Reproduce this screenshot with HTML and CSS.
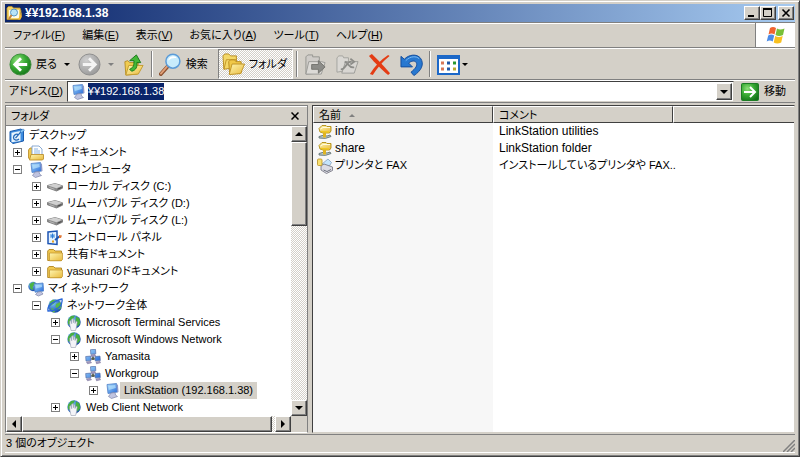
FILE: index.html
```
<!DOCTYPE html>
<html lang="ja">
<head>
    <meta charset="UTF-8">
    <meta name="viewport" content="width=device-width, initial-scale=1.0">
    <title>¥¥192.168.1.38</title>
    <link rel="stylesheet" href="styles.css">
</head>
<body>
    <!-- Icon symbols -->
    <svg class="symbols" aria-hidden="true">
        <defs>
            <linearGradient id="gold" x1="0" y1="0" x2="1" y2="1"><stop offset="0" stop-color="#fff6b0"/><stop offset="1" stop-color="#e8b93c"/></linearGradient>
            <linearGradient id="blue" x1="0" y1="0" x2="1" y2="1"><stop offset="0" stop-color="#a8dcfc"/><stop offset="1" stop-color="#2468d8"/></linearGradient>
            <radialGradient id="green" cx=".35" cy=".3" r=".8"><stop offset="0" stop-color="#8ee07a"/><stop offset=".5" stop-color="#36a832"/><stop offset="1" stop-color="#127018"/></radialGradient>
            <radialGradient id="gray" cx=".35" cy=".3" r=".8"><stop offset="0" stop-color="#cfcfcf"/><stop offset="1" stop-color="#969696"/></radialGradient>
            <radialGradient id="earth" cx=".35" cy=".3" r=".8"><stop offset="0" stop-color="#7cc4f8"/><stop offset="1" stop-color="#0c3c9c"/></radialGradient>
        </defs>
        <symbol id="i-desktop" viewBox="0 0 16 16">
            <path d="M1 3.500 12 1l2.500 2v10L4 15.500 1 13z" fill="#3c8ce0" stroke="#1c5cac"/>
            <path d="M2.500 4.800l9-1.800v10l-9 1.200z" fill="#e8f4fc"/>
            <path d="M9.500 7C7.500 5 4.500 7 4.500 9.500s3 3.500 5.500 1.500M6.500 10.200l6-7" fill="none" stroke="#2468b8" stroke-width="1.300"/>
            <path d="M11 3l3-2 1.500 1-3 3z" fill="#8cc8f4" stroke="#2468b8" stroke-width=".5"/>
        </symbol>
        <symbol id="i-docs" viewBox="0 0 16 16">
            <path d="M.5 5 2 3h4v11H1.500l-1-1z" fill="#f0c850" stroke="#b88820" stroke-width=".8"/>
            <path d="M4 1h7l3 3v9H4z" fill="#fff" stroke="#6c94c8" stroke-width=".8"/>
            <path d="M6 4h4M6 6h6M6 8h6" stroke="#88b4e4"/>
            <path d="M1.500 15 3 9.500h12.500v4.500l-1 1z" fill="url(#gold)" stroke="#b88820" stroke-width=".8"/>
        </symbol>
        <symbol id="i-pc" viewBox="0 0 16 16">
            <path d="M3 1.500 12.500.5l1 8.500L4 10.500z" fill="url(#blue)" stroke="#5080c8" stroke-width=".8"/>
            <path d="M4.300 2.700l7-.8.500 3.200-7 2z" fill="#c4ecff" opacity=".6"/>
            <path d="M7 10l4-.5.500 2.500 2 1.500-6 2-3-2z" fill="#c0c4e0" stroke="#7c84a8" stroke-width=".7"/>
            <path d="M12.500 1l1.500 1 .5 7-1.500.5z" fill="#8c98c8"/>
        </symbol>
        <symbol id="i-drive" viewBox="0 0 16 16">
            <path d="M.5 6.500 8 4.500l7.500 2.300v2.400L9.500 12 .5 8.800z" fill="#8c8c8c" stroke="#666" stroke-width=".7"/>
            <path d="M.8 6.500 8 4.600l7 2.200-5.500 2.400z" fill="#d0d0d0"/>
            <path d="M10.500 10.200l4-1.700" stroke="#444"/>
            <path d="M2.500 8.500l5 1.800" stroke="#b8b8b8"/>
        </symbol>
        <symbol id="i-control" viewBox="0 0 16 16">
            <path d="M1 2l9-1v13.500L1 13.500z" fill="#e4f2fe" stroke="#1c54b4" stroke-width="1.500"/>
            <path d="M5.500 3.500v5M3 6h5M3.700 4.200l3.600 3.600m0-3.600L3.700 7.800" stroke="#2c7cd8"/>
            <path d="M5 11.500h2" stroke="#e8a020" stroke-width="2"/>
            <path d="M8 10l5-4" stroke="#1c54b4" stroke-width="1.800"/>
            <path d="M12 5l3 .500-1 2.500h-2z" fill="#e07838"/>
        </symbol>
        <symbol id="i-folder" viewBox="0 0 16 16">
            <path d="M.7 4 2 2.500h4.500L8 4h6.500v9.500H.7z" fill="#f0c850" stroke="#b08420" stroke-width=".9"/>
            <path d="M2.500 6h13v6.500l-1.300 1.300H2.500z" fill="url(#gold)" stroke="#c09028" stroke-width=".7"/>
        </symbol>
        <symbol id="i-globe" viewBox="0 0 16 16">
            <circle cx="8" cy="8" r="6.800" fill="url(#earth)"/>
            <path d="M3 4l3-2.500 3 1.500-2 2.500-3 2-2 1zM9 6l4-2 1.500 3-1 4-3 .500-2-3zM4 10l3 1 1 3-2 .5z" fill="#58b848"/>
            <path d="M1 13C0 8 4 4 15 1c1 6-4 12-14 12z" fill="none" stroke="#2c68d8" stroke-width="1.300"/>
        </symbol>
        <symbol id="i-places" viewBox="0 0 16 16">
            <circle cx="5" cy="5.500" r="4.700" fill="url(#earth)"/>
            <path d="M1.500 3l4-2 2 2-3 3 1 3-3-1z" fill="#4cb444"/>
            <path d="M6 3l9-1 .7 8-8.700 1.200z" fill="url(#blue)" stroke="#5080c8" stroke-width=".8"/>
            <path d="M7.500 4.200l6.300-.7.200 2.500-6.200 1.500z" fill="#c4ecff" opacity=".6"/>
            <path d="M10 11l3-.5 2 2.500-4.500 2-3-1.500z" fill="#c0c4e0" stroke="#7c84a8" stroke-width=".7"/>
        </symbol>
        <symbol id="i-net" viewBox="0 0 16 16">
            <circle cx="8" cy="7" r="6.700" fill="url(#earth)"/>
            <path d="M2 5l3-4 4-.5L7 4 4 6v4l-2-1zM10 1.500l3.500 2 .7 5-2.700 3-2-5z" fill="#48b040"/>
            <path d="M5 15.500 3.800 10V6l1.200-.3.700 3V4l1.300-.3.500 4V4.500l1.300.2.200 3.800 1-2.300 1.200.6-.7 5.200-1 3.500z" fill="#f4f4f8" stroke="#98a0b0" stroke-width=".6"/>
        </symbol>
        <symbol id="i-group" viewBox="0 0 16 16">
            <path d="M8 7v3M3 10h10" stroke="#4c5878"/>
            <path d="M5.500.7l5-.4.300 4.500-5 .5zM.7 7.500l5-.4.300 4.500-5 .5zM10 7.500l5-.4.300 4.500-5 .5z" fill="url(#blue)" stroke="#5870a8" stroke-width=".7"/>
            <path d="M6 6l4-.5.500 1.500-4 .6zM1.500 13l4-.6 1 1.400-4 1zM11 13l4-.6.5 1.400-4 1z" fill="#a49cc4" stroke="#706890" stroke-width=".5"/>
            <circle cx="8" cy="9.500" r="1.500" fill="#58604c"/>
        </symbol>
        <symbol id="i-share" viewBox="0 0 16 16">
            <path d="M2 4.500 5 1.500h4l1 1h4v4.500L12.500 9H6L3 8z" fill="url(#gold)" stroke="#b08c10" stroke-width=".9"/>
            <path d="M3.500 5 6 3.500h7" fill="none" stroke="#fffce0"/>
            <path d="M4 7.500l8 .5" stroke="#f0c820" stroke-width="1.500"/>
            <path d="M2 12.500q4-2 8-.5l3-1 1 1.500q-5 3-12 1.500z" fill="#b8c8c8" stroke="#586868" stroke-width=".8"/>
            <path d="M7.500 9v4.500" stroke="#e0b420" stroke-width="3"/>
        </symbol>
        <symbol id="i-printer" viewBox="0 0 16 16">
            <path d="M5 6l6-5 3.500 3.500-3 5z" fill="#c4e4fc" stroke="#7898b8" stroke-width=".7"/>
            <path d="M4 8l3-2 8.500 3v3.500l-6 3L4 12z" fill="#dcdce4" stroke="#70707c" stroke-width=".8"/>
            <path d="M6.500 12l3.500 1.500 4-2" stroke="#6c707c" fill="none"/>
            <rect x=".5" y="1" width="4.500" height="6.500" rx="1" fill="#f8e070" stroke="#b89020" stroke-width=".8"/>
        </symbol>
        <symbol id="i-title" viewBox="0 0 16 16">
            <path d="M1 3 2.500 1.500H6L7.500 3H14l1 3-1 8.500H1z" fill="#f4d468" stroke="#c09428" stroke-width=".8"/>
            <path d="M3 5h10v8H3z" fill="#fffbe8"/>
            <circle cx="8" cy="7.500" r="3.500" fill="#b8e4f8" stroke="#5898c8"/>
            <path d="M5.500 10 3 14" stroke="#c88440" stroke-width="2"/>
            <path d="M12 14.500 15.500 7l.3 5-1.500 2.500z" fill="#f0b838"/>
        </symbol>
        <symbol id="i-back" viewBox="0 0 24 24">
            <circle cx="12" cy="12" r="11" fill="url(#green)" stroke="#3c8c3c"/>
            <path d="M19 12H7M12.500 5.500 6 12l6.500 6.500" fill="none" stroke="#fff" stroke-width="3"/>
        </symbol>
        <symbol id="i-forward" viewBox="0 0 24 24">
            <circle cx="12" cy="12" r="11" fill="url(#gray)" stroke="#8c8c8c"/>
            <path d="M5 12h12M11.500 5.500 18 12l-6.500 6.500" fill="none" stroke="#f4f4f4" stroke-width="3"/>
        </symbol>
        <symbol id="i-up" viewBox="0 0 24 24">
            <path d="M3 9l3-1 2 2h9l-1 12-12 1z" fill="#f0cc50" stroke="#b89028"/>
            <path d="M4 23l3-10h15l-5 9z" fill="url(#gold)" stroke="#c49c30"/>
            <path d="M10 19c5-1 6-5 5.500-9H19.500L15 2 8 8h4.500c0 4 0 7-4.500 9z" fill="#44b838" stroke="#187818"/>
        </symbol>
        <symbol id="i-search" viewBox="0 0 24 24">
            <path d="M9 14 2 22" stroke="#8c5030" stroke-width="4" stroke-linecap="round"/>
            <path d="M9 13.500 2 21.500" stroke="#e0a078" stroke-width="2" stroke-linecap="round"/>
            <circle cx="14.500" cy="8.500" r="7.300" fill="#c8ecfc" stroke="#5c9cd8" stroke-width="1.600"/>
            <path d="M9.500 8c.5-3 3-4.500 5.500-4.500 2 0 3 1 3.500 2-3-.5-6 0-9 2.500z" fill="#fff"/>
        </symbol>
        <symbol id="i-folders" viewBox="0 0 24 24">
            <path d="M1 3l2-2h4l2 2h6v12l-13 2z" fill="#f4d868" stroke="#b88c20"/>
            <path d="M7 9l2-2h4l1.500 2H20v12l-12 1z" fill="#f0c848" stroke="#b88c20"/>
            <path d="M7.500 22.500l3-11H23.500l-4 10z" fill="url(#gold)" stroke="#c09428"/>
            <path d="M2 17l2.500-10H15v2" fill="none" stroke="#c09428"/>
        </symbol>
        <symbol id="i-move" viewBox="0 0 24 24">
            <path d="M2 4l2-2h5v2h7v17l-14 1z" fill="#cfccc8" stroke="#949490"/>
            <path d="M2 22l3-13h13l4 1-4 12z" fill="#dcdad6" stroke="#9c9c98"/>
            <path d="M8 12h7V8l7 6.500-7 6.500v-4H8z" fill="#8c8c88" stroke="#74746f"/>
        </symbol>
        <symbol id="i-copy" viewBox="0 0 24 24">
            <path d="M1 5l2-2h4l1 2h5v13l-12 2z" fill="#dad8d4" stroke="#a4a49f"/>
            <path d="M6 21l4-12h13l-4 12z" fill="#d8d6d2" stroke="#9c9c98"/>
            <path d="M5 17c6 0 5-8 11-8M9 9c5 2 4 7 10 6m-4-9 4 3-4 3" fill="none" stroke="#8c8c88" stroke-width="1.800"/>
        </symbol>
        <symbol id="i-delete" viewBox="0 0 24 24">
            <path d="M1 3 4 1c6 6 12 12 19 20l-2 2C15 18 7 10 1 3z" fill="#e43c14"/>
            <path d="M21 2l1.500 1C15 9 9 16 5 23l-3-1C7 14 13 7 21 2z" fill="#e43c14"/>
        </symbol>
        <symbol id="i-undo" viewBox="0 0 24 24">
            <path d="M1 3.500 4.500 6.500c5-5 13-6 17-1 4 6 1 13-7 18l-3-3.500c5-4 7-7 5.500-10-1.500-2.500-5-2-8 .5L13 14.500H1z" fill="#2878d0" stroke="#144c9c"/>
            <path d="M6 8c5-5 11-5 14-2" fill="none" stroke="#7cbcf4"/>
        </symbol>
        <symbol id="i-views" viewBox="0 0 23 23">
            <rect x="1" y="3" width="21" height="18" fill="#fff" stroke="#1c68c8" stroke-width="2"/>
            <path d="M0 4h23" stroke="#1c68c8" stroke-width="4"/>
            <path d="M4 10h3M4 16h3" stroke="#d87858" stroke-width="3"/>
            <path d="M10 10h3M10 16h3" stroke="#2058a8" stroke-width="3"/>
            <path d="M16 10h3" stroke="#289830" stroke-width="3"/>
            <path d="M16 16h3" stroke="#b8a830" stroke-width="3"/>
        </symbol>
        <symbol id="i-go" viewBox="0 0 18 18">
            <rect x=".5" y=".5" width="17" height="17" rx="1" fill="url(#green)" stroke="#1c7c24"/>
            <path d="M3 9h11M9 4l5 5-5 5" fill="none" stroke="#fff" stroke-width="2"/>
        </symbol>
        <symbol id="i-flag" viewBox="0 0 20 18">
            <path d="M4 2q3-2 6 0L8.500 8.500q-3-2-6 0z" fill="#f06430"/>
            <path d="M11 2.500q3 2 7.500 0L17 9q-4 2-7.500 0z" fill="#78c038"/>
            <path d="M2.200 9.500q3-2 6 0L6.700 15.500q-3-2-6 0z" fill="#4c8ce8"/>
            <path d="M9.200 10q3.500 2 7.500 0l-1.500 6.500q-4 2-7.500 0z" fill="#f8c020"/>
        </symbol>
    </svg>

    <div class="window">
        <!-- Title bar -->
        <header class="titlebar">
            <svg class="icon"><use href="#i-title"/></svg>
            <h1>¥¥192.168.1.38</h1>
            <div class="window-buttons">
                <button class="raised" aria-label="最小化"><svg viewBox="0 0 12 10"><path d="M2 8h6" stroke="#000" stroke-width="2"/></svg></button>
                <button class="raised" aria-label="最大化"><svg viewBox="0 0 12 10"><path d="M1.500 1v7.500h8V1M1 1h9" fill="none" stroke="#000"/><path d="M1 1h9" stroke="#000" stroke-width="2"/></svg></button>
                <button class="raised close" aria-label="閉じる"><svg viewBox="0 0 12 10"><path d="M2.500 1.500l7 7m0-7-7 7" stroke="#000" stroke-width="1.600"/></svg></button>
            </div>
        </header>

        <!-- Menu bar -->
        <nav class="menubar">
            <button>ファイル(<u>F</u>)</button>
            <button>編集(<u>E</u>)</button>
            <button>表示(<u>V</u>)</button>
            <button>お気に入り(<u>A</u>)</button>
            <button>ツール(<u>T</u>)</button>
            <button>ヘルプ(<u>H</u>)</button>
            <div class="brand"><svg><use href="#i-flag"/></svg></div>
        </nav>

        <!-- Toolbar -->
        <div class="toolbar">
            <button class="tool"><svg><use href="#i-back"/></svg>戻る</button>
            <button class="drop" aria-label="戻る履歴"></button>
            <button class="tool" aria-label="進む" disabled><svg><use href="#i-forward"/></svg></button>
            <button class="drop" aria-label="進む履歴" disabled></button>
            <button class="tool" aria-label="上へ"><svg><use href="#i-up"/></svg></button>
            <span class="separator"></span>
            <button class="tool"><svg><use href="#i-search"/></svg>検索</button>
            <button class="tool pressed" aria-pressed="true"><svg><use href="#i-folders"/></svg>フォルダ</button>
            <span class="separator"></span>
            <div class="edit-tools">
                <button class="tool" aria-label="移動先" disabled><svg><use href="#i-move"/></svg></button>
                <button class="tool" aria-label="コピー先" disabled><svg><use href="#i-copy"/></svg></button>
                <button class="tool" aria-label="削除"><svg><use href="#i-delete"/></svg></button>
                <button class="tool" aria-label="元に戻す"><svg><use href="#i-undo"/></svg></button>
            </div>
            <span class="separator"></span>
            <button class="tool views" aria-label="表示"><svg><use href="#i-views"/></svg><span class="arrow-down"></span></button>
        </div>

        <!-- Address bar -->
        <form class="addressbar" onsubmit="return false">
            <label for="address">アドレス(<u>D</u>)</label>
            <div class="combo">
                <svg class="icon"><use href="#i-pc"/></svg>
                <input type="text" id="address" value="¥¥192.168.1.38" spellcheck="false" autocomplete="off">
                <button type="button" class="raised" aria-label="アドレス一覧"><span class="arrow-down big"></span></button>
            </div>
            <button class="go"><svg><use href="#i-go"/></svg>移動</button>
        </form>

        <main class="panes">
            <!-- Folder tree -->
            <section class="folders">
                <div class="folders-head">
                    <h2>フォルダ</h2>
                    <button aria-label="フォルダを閉じる"><svg viewBox="0 0 8 8"><path d="M.5.5l7 7m0-7-7 7" stroke="#000" stroke-width="1.500"/></svg></button>
                </div>
                <div class="tree-area">
                    <div class="tree">
                        <div class="row"><svg class="icon"><use href="#i-desktop"/></svg><span>デスクトップ</span></div>
                        <ul>
                            <li><div class="row"><button class="toggle plus" aria-label="展開"></button><svg class="icon"><use href="#i-docs"/></svg><span>マイ ドキュメント</span></div></li>
                            <li><div class="row"><button class="toggle" aria-label="折りたたむ"></button><svg class="icon"><use href="#i-pc"/></svg><span>マイ コンピュータ</span></div>
                                <ul>
                                    <li><div class="row"><button class="toggle plus" aria-label="展開"></button><svg class="icon"><use href="#i-drive"/></svg><span>ローカル ディスク (C:)</span></div></li>
                                    <li><div class="row"><button class="toggle plus" aria-label="展開"></button><svg class="icon"><use href="#i-drive"/></svg><span>リムーバブル ディスク (D:)</span></div></li>
                                    <li><div class="row"><button class="toggle plus" aria-label="展開"></button><svg class="icon"><use href="#i-drive"/></svg><span>リムーバブル ディスク (L:)</span></div></li>
                                    <li><div class="row"><button class="toggle plus" aria-label="展開"></button><svg class="icon"><use href="#i-control"/></svg><span>コントロール パネル</span></div></li>
                                    <li><div class="row"><button class="toggle plus" aria-label="展開"></button><svg class="icon"><use href="#i-folder"/></svg><span>共有ドキュメント</span></div></li>
                                    <li><div class="row"><button class="toggle plus" aria-label="展開"></button><svg class="icon"><use href="#i-folder"/></svg><span>yasunari のドキュメント</span></div></li>
                                </ul>
                            </li>
                            <li><div class="row"><button class="toggle" aria-label="折りたたむ"></button><svg class="icon"><use href="#i-places"/></svg><span>マイ ネットワーク</span></div>
                                <ul>
                                    <li><div class="row"><button class="toggle" aria-label="折りたたむ"></button><svg class="icon"><use href="#i-globe"/></svg><span>ネットワーク全体</span></div>
                                        <ul>
                                            <li><div class="row"><button class="toggle plus" aria-label="展開"></button><svg class="icon"><use href="#i-net"/></svg><span>Microsoft Terminal Services</span></div></li>
                                            <li><div class="row"><button class="toggle" aria-label="折りたたむ"></button><svg class="icon"><use href="#i-net"/></svg><span>Microsoft Windows Network</span></div>
                                                <ul>
                                                    <li><div class="row"><button class="toggle plus" aria-label="展開"></button><svg class="icon"><use href="#i-group"/></svg><span>Yamasita</span></div></li>
                                                    <li><div class="row"><button class="toggle" aria-label="折りたたむ"></button><svg class="icon"><use href="#i-group"/></svg><span>Workgroup</span></div>
                                                        <ul>
                                                            <li><div class="row selected"><button class="toggle plus" aria-label="展開"></button><svg class="icon"><use href="#i-pc"/></svg><span>LinkStation (192.168.1.38)</span></div></li>
                                                        </ul>
                                                    </li>
                                                </ul>
                                            </li>
                                            <li><div class="row"><button class="toggle plus" aria-label="展開"></button><svg class="icon"><use href="#i-net"/></svg><span>Web Client Network</span></div></li>
                                        </ul>
                                    </li>
                                </ul>
                            </li>
                        </ul>
                    </div>
                    <div class="scrollbar vertical">
                        <button class="raised" aria-label="上へスクロール"><span class="arrow-up"></span></button>
                        <div class="raised thumb"></div>
                        <button class="raised" aria-label="下へスクロール"><span class="arrow-down big"></span></button>
                    </div>
                    <div class="scrollbar horizontal">
                        <button class="raised" aria-label="左へスクロール"><span class="arrow-left"></span></button>
                        <div class="raised thumb"></div>
                        <button class="raised" aria-label="右へスクロール"><span class="arrow-right"></span></button>
                    </div>
                </div>
            </section>

            <!-- File list -->
            <section class="files">
                <table>
                    <thead>
                        <tr>
                            <th class="name">名前<span class="sort"></span></th>
                            <th class="comment">コメント</th>
                            <th></th>
                        </tr>
                    </thead>
                    <tbody>
                        <tr><td><div class="file latin"><svg class="icon"><use href="#i-share"/></svg>info</div></td><td class="latin">LinkStation utilities</td><td></td></tr>
                        <tr><td><div class="file latin"><svg class="icon"><use href="#i-share"/></svg>share</div></td><td class="latin">LinkStation folder</td><td></td></tr>
                        <tr><td><div class="file"><svg class="icon"><use href="#i-printer"/></svg>プリンタと FAX</div></td><td>インストールしているプリンタや FAX..</td><td></td></tr>
                    </tbody>
                </table>
            </section>
        </main>

        <!-- Status bar -->
        <footer class="statusbar">
            <span>3 個のオブジェクト</span>
            <svg class="grip" viewBox="0 0 12 12"><path d="M0 12 12 0M4 12l8-8M8 12l4-4" stroke="#808080" stroke-width="1.500"/></svg>
        </footer>
    </div>

    <script>
        // The address is selected as soon as the window opens
        var address = document.getElementById('address');
        address.focus();
        address.select();
    </script>
</body>
</html>
```
FILE: styles.css
```
/* Base */
* {
    box-sizing: border-box;
}

body {
    margin: 0;
    height: 100vh;
    font-family: "Liberation Sans", "Noto Sans CJK JP", sans-serif;
    font-size: 11px;
    line-height: 17px;
    font-feature-settings: "palt";
    color: #000;
    background-color: #d4d0c8;
}

button,
input {
    font: inherit;
    font-feature-settings: inherit;
    color: inherit;
    margin: 0;
    padding: 0;
    border: none;
    background: none;
}

h1,
h2 {
    margin: 0;
    font-size: inherit;
}

svg {
    display: block;
    flex: none;
}

.symbols {
    position: absolute;
    width: 0;
    height: 0;
}

.icon {
    width: 16px;
    height: 16px;
}

.latin {
    font-size: 12px;
}

/* Classic raised button face */
.raised {
    display: flex;
    align-items: center;
    justify-content: center;
    background-color: #d4d0c8;
    border: 1px solid;
    border-color: #fff #404040 #404040 #fff;
    box-shadow: inset -1px -1px 0 #808080;
}

.arrow-down,
.arrow-up,
.arrow-left,
.arrow-right {
    border: 3px solid transparent;
}

.arrow-down {
    border-top-color: #000;
    border-bottom: none;
}

.arrow-down.big {
    border-width: 4px 4px 0;
}

.arrow-up {
    border-width: 0 4px 4px;
    border-bottom-color: #000;
}

.arrow-left {
    border-width: 4px 4px 4px 0;
    border-right-color: #000;
}

.arrow-right {
    border-width: 4px 0 4px 4px;
    border-left-color: #000;
}

/* Window frame */
.window {
    display: flex;
    flex-direction: column;
    height: 100%;
    padding: 3px 4px 3px;
    border: 1px solid;
    border-color: #d4d0c8 #404040 #404040 #d4d0c8;
    box-shadow: inset 1px 1px 0 #fff, inset -1px -1px 0 #808080;
}

.titlebar {
    display: flex;
    align-items: center;
    gap: 3px;
    height: 18px;
    flex: none;
    padding: 0 1px;
    color: #fff;
    background-image: linear-gradient(to right, #0a246a, #a6caf0);
}

.titlebar h1 {
    flex: 1;
    font-size: 12px;
}

.window-buttons {
    display: flex;
}

.window-buttons button {
    width: 16px;
    height: 14px;
}

.window-buttons svg {
    width: 12px;
    height: 10px;
}

.window-buttons .close {
    margin-left: 2px;
}

/* Menu bar */
.menubar {
    display: flex;
    align-items: center;
    gap: 17px;
    height: 26px;
    flex: none;
    padding-left: 8px;
    border: 1px solid #808080;
    border-width: 1px 0;
    box-shadow: inset 0 1px 0 #fff;
}

.brand {
    display: flex;
    align-items: center;
    justify-content: center;
    align-self: stretch;
    width: 40px;
    margin-left: auto;
    background-color: #fff;
    border-left: 1px solid #808080;
}

.brand svg {
    width: 20px;
    height: 18px;
}

/* Toolbar */
.toolbar {
    display: flex;
    align-items: center;
    height: 32px;
    flex: none;
    padding-left: 4px;
    border-top: 1px solid #fff;
    border-bottom: 1px solid #808080;
}

.tool {
    display: flex;
    align-items: center;
    gap: 4px;
}

.tool svg {
    width: 23px;
    height: 23px;
}

.drop {
    width: 21px;
    height: 22px;
    display: flex;
    align-items: center;
    justify-content: center;
}

.drop::before {
    content: "";
    border: 3px solid transparent;
    border-top-color: #000;
    border-bottom: none;
}

.drop:disabled::before {
    border-top-color: #808080;
}

.separator {
    width: 2px;
    height: 26px;
    margin: 0 6px;
    border-left: 1px solid #808080;
    border-right: 1px solid #fff;
}

.pressed {
    height: 30px;
    margin-left: 10px;
    padding: 0 5px 0 3px;
    border: 1px solid;
    border-color: #808080 #fff #fff #808080;
    background: repeating-conic-gradient(#fff 0 25%, #d4d0c8 0 50%) 0 0 / 2px 2px;
}

.pressed + .separator {
    margin-left: 3px;
}

.edit-tools {
    display: flex;
    gap: 9px;
}

.views {
    gap: 2px;
}

/* Address bar */
.addressbar {
    display: flex;
    align-items: center;
    gap: 7px;
    height: 23px;
    flex: none;
    padding: 0 9px 0 4px;
    border-top: 1px solid #fff;
    border-bottom: 1px solid #808080;
}

.addressbar label {
    margin-right: -3px;
}

.combo {
    display: flex;
    align-items: center;
    flex: 1;
    height: 21px;
    padding: 1px 1px 1px 2px;
    background-color: #fff;
    border: 1px solid;
    border-color: #404040 #d4d0c8 #d4d0c8 #404040;
}

.combo input {
    flex: 1;
    min-width: 0;
    margin-left: 2px;
    outline: none;
}

.combo input::selection {
    color: #fff;
    background-color: #0a246a;
}

.combo button {
    width: 16px;
    height: 17px;
}

.go {
    display: flex;
    align-items: center;
    gap: 5px;
}

.go svg {
    width: 18px;
    height: 18px;
}

/* Panes */
.panes {
    display: flex;
    gap: 4px;
    flex: 1;
    min-height: 0;
    margin-top: 2px;
}

.folders {
    display: flex;
    flex-direction: column;
    width: 303px;
    flex: none;
    border: 1px solid;
    border-color: #808080 #808080 #fff #808080;
}

.folders-head {
    display: flex;
    align-items: center;
    justify-content: space-between;
    height: 20px;
    flex: none;
    padding: 0 8px 0 5px;
    border-top: 1px solid #fff;
    border-bottom: 1px solid #808080;
}

.folders-head h2 {
    font-weight: normal;
}

.folders-head svg {
    width: 8px;
    height: 8px;
}

.tree-area {
    display: grid;
    grid-template-columns: 1fr 16px;
    grid-template-rows: 1fr 16px;
    flex: 1;
    min-height: 0;
}

.tree {
    overflow: hidden;
    min-height: 0;
    padding: 1px 0 0 3px;
    background-color: #fff;
}

.tree ul {
    margin: 0;
    padding: 0 0 0 4px;
    list-style: none;
}

.tree ul ul {
    padding-left: 19px;
}

.row {
    display: flex;
    align-items: center;
    height: 17px;
    white-space: nowrap;
}

.row span {
    padding: 0 4px;
}

.selected span {
    background-color: #d4d0c8;
}

.toggle {
    width: 9px;
    height: 9px;
    margin-right: 6px;
    border: 1px solid #808080;
    background: linear-gradient(#000, #000) center / 5px 1px no-repeat;
}

.toggle.plus {
    background: linear-gradient(#000, #000) center / 5px 1px no-repeat, linear-gradient(#000, #000) center / 1px 5px no-repeat;
}

.scrollbar {
    display: flex;
    background: repeating-conic-gradient(#fff 0 25%, #d4d0c8 0 50%) 0 0 / 2px 2px;
}

.scrollbar button {
    width: 16px;
    height: 16px;
    flex: none;
}

.vertical {
    flex-direction: column;
}

.vertical .thumb {
    height: 29%;
}

.vertical button:last-child {
    margin-top: auto;
}

.horizontal .thumb {
    flex: 1;
    margin-right: 3px;
}

/* File list */
.files {
    flex: 1;
    min-width: 0;
    overflow: hidden;
    border: 1px solid;
    border-color: #404040 #d4d0c8 #d4d0c8 #404040;
    background-image: linear-gradient(to right, #f7f7f7 180px, #fff 180px);
}

.files table {
    width: 100%;
    table-layout: fixed;
    border-collapse: separate;
    border-spacing: 0;
}

.files th {
    height: 17px;
    padding: 0 5px;
    line-height: 14px;
    font-weight: normal;
    text-align: left;
    background-color: #d4d0c8;
    border: 1px solid;
    border-color: #fff #404040 #404040 #fff;
}

.files th:last-child {
    border-right: none;
}

.files .name,
.files .comment {
    width: 180px;
}

.sort {
    display: inline-block;
    margin-left: 8px;
    vertical-align: middle;
    border: 3px solid transparent;
    border-top: none;
    border-bottom-color: #808080;
}

.files td {
    height: 17px;
    padding: 0 0 0 6px;
    line-height: 17px;
    white-space: nowrap;
}

.files td:first-child {
    padding-left: 4px;
}

.file {
    display: flex;
    align-items: center;
    gap: 2px;
}

/* Status bar */
.statusbar {
    display: flex;
    align-items: center;
    justify-content: space-between;
    height: 19px;
    flex: none;
    margin-top: 1px;
    padding-left: 1px;
    border-top: 1px solid #808080;
    border-bottom: 1px solid #fff;
}

.grip {
    align-self: flex-end;
    width: 12px;
    height: 12px;
}
```
